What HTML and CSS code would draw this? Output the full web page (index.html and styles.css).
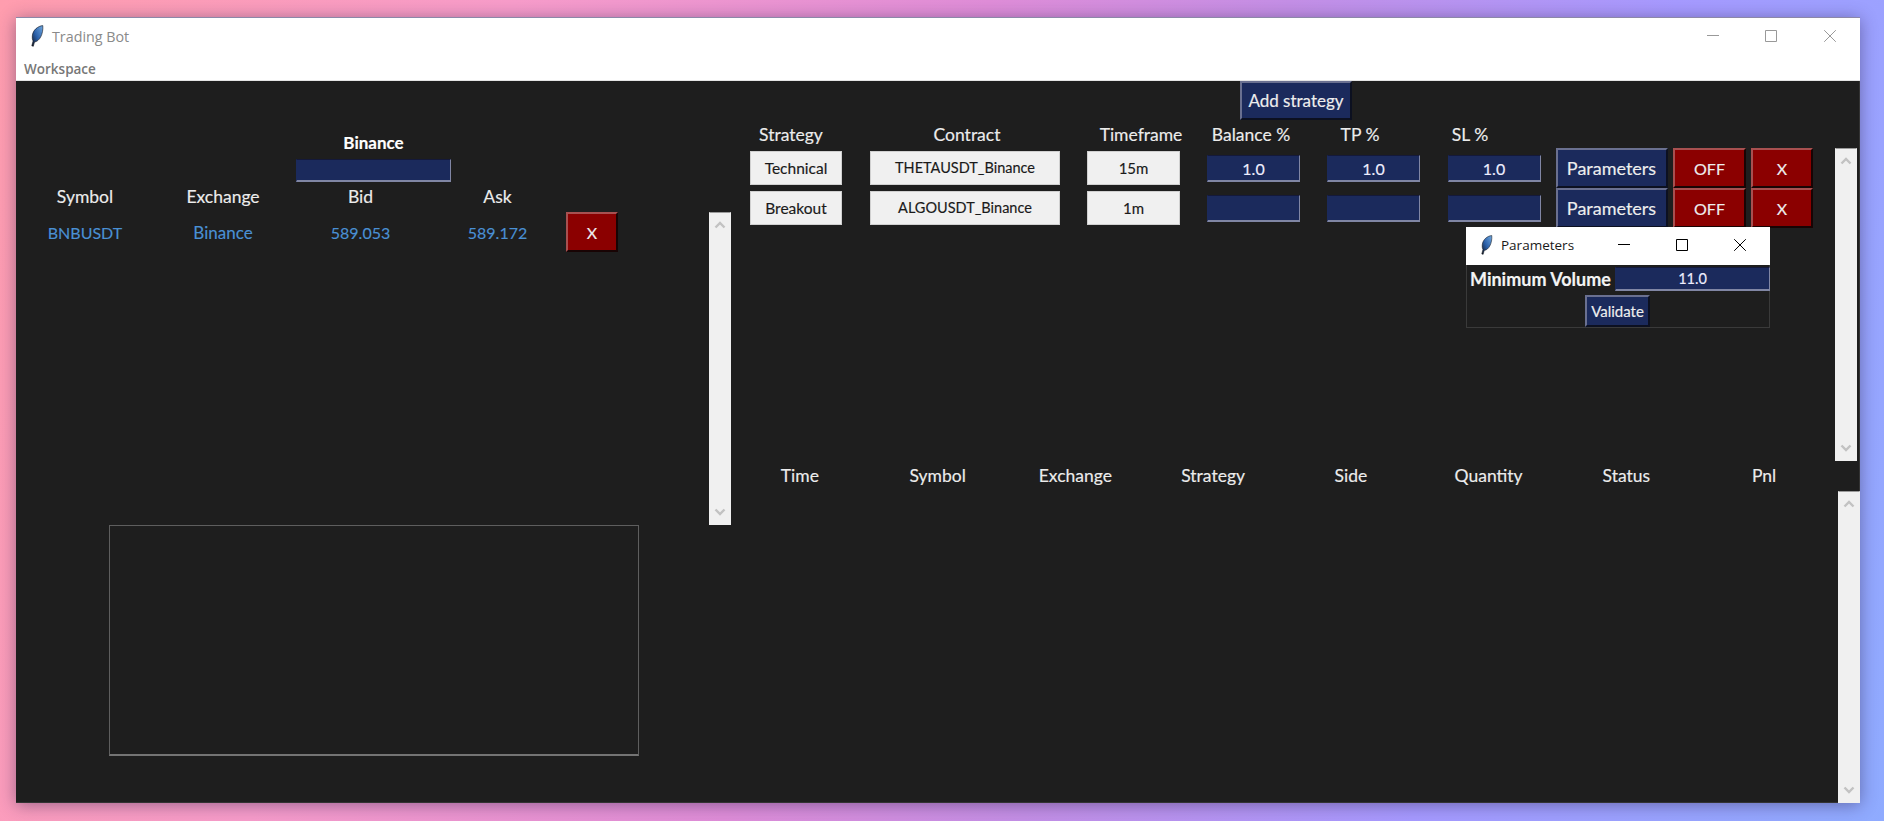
FILE: index.html
```html
<!DOCTYPE html>
<html lang="en">
<head>
<meta charset="utf-8">
<title>Trading Bot</title>
<link rel="stylesheet" href="styles.css">
</head>
<body>
<svg class="defs" width="0" height="0" aria-hidden="true">
  <defs>
    <linearGradient id="quill" x1="0" y1="1" x2="1" y2="0">
      <stop offset="0" stop-color="#10131c"/>
      <stop offset=".45" stop-color="#2a5fa8"/>
      <stop offset="1" stop-color="#6fa8e0"/>
    </linearGradient>
    <symbol id="feather" viewBox="0 0 14 22">
      <path d="M12.800.600C8 1 2.800 5 2.300 11c-.2 2 .1 3.600.8 5L1.800 20.800l1.500.5 1.200-4.300C9.500 16.500 13.500 9 12.800.600z" fill="url(#quill)" stroke="#11141c" stroke-width=".6"/>
    </symbol>
    <symbol id="min" viewBox="0 0 12 12"><path d="M0 5.500h12" fill="none" stroke="currentColor"/></symbol>
    <symbol id="max" viewBox="0 0 12 12"><path d="M.5.500h11v11H.5z" fill="none" stroke="currentColor"/></symbol>
    <symbol id="close" viewBox="0 0 12 12"><path d="M.2.200l11.600 11.600M11.800.200L.2 11.800" fill="none" stroke="currentColor"/></symbol>
    <symbol id="up" viewBox="0 0 12 8"><path d="M1.500 6.500L6 2l4.500 4.500" fill="none" stroke="currentColor" stroke-width="2.400"/></symbol>
    <symbol id="down" viewBox="0 0 12 8"><path d="M1.500 1.500L6 6l4.500-4.500" fill="none" stroke="currentColor" stroke-width="2.400"/></symbol>
  </defs>
</svg>

<div class="window">
  <header class="titlebar">
    <svg class="feather"><use href="#feather"/></svg>
    <span class="title">Trading Bot</span>
    <div class="controls">
      <svg class="ctl"><use href="#min"/></svg>
      <svg class="ctl"><use href="#max"/></svg>
      <svg class="ctl"><use href="#close"/></svg>
    </div>
  </header>
  <nav class="menubar">Workspace</nav>

  <main class="main">
    <section class="left">
      <div class="watch-area">
        <div class="watch">
          <div class="exchange-pick">
            <div class="exchange-name">Binance</div>
            <div class="entry entry-pick"></div>
          </div>
          <div class="watch-grid">
            <div class="head">Symbol</div>
            <div class="head">Exchange</div>
            <div class="head">Bid</div>
            <div class="head">Ask</div>
            <div></div>
            <div class="quote">BNBUSDT</div>
            <div class="quote quote-word">Binance</div>
            <div class="quote">589.053</div>
            <div class="quote">589.172</div>
            <button class="btn red watch-x">X</button>
          </div>
        </div>
        <div class="scrollbar sb-watch">
          <svg class="chev"><use href="#up"/></svg>
          <svg class="chev"><use href="#down"/></svg>
        </div>
      </div>
      <div class="logbox"></div>
    </section>

    <section class="right">
      <div class="strategy-area">
        <div class="strategies">
          <button class="btn navy add">Add strategy</button>
          <div class="strat-head">
            <div class="head">Strategy</div>
            <div class="head">Contract</div>
            <div class="head">Timeframe</div>
            <div class="head">Balance %</div>
            <div class="head">TP %</div>
            <div class="head">SL %</div>
          </div>
          <div class="strat-row">
            <div class="pick p-strategy">Technical</div>
            <div class="pick p-contract">THETAUSDT_Binance</div>
            <div class="pick p-time">15m</div>
            <div class="entry entry-num">1.0</div>
            <div class="entry entry-num">1.0</div>
            <div class="entry entry-num">1.0</div>
            <button class="btn navy b-param">Parameters</button>
            <button class="btn red b-off">OFF</button>
            <button class="btn red b-x">X</button>
          </div>
          <div class="strat-row">
            <div class="pick p-strategy">Breakout</div>
            <div class="pick p-contract">ALGOUSDT_Binance</div>
            <div class="pick p-time">1m</div>
            <div class="entry entry-num"></div>
            <div class="entry entry-num"></div>
            <div class="entry entry-num"></div>
            <button class="btn navy b-param">Parameters</button>
            <button class="btn red b-off">OFF</button>
            <button class="btn red b-x">X</button>
          </div>
        </div>
        <div class="scrollbar sb-strategy">
          <svg class="chev"><use href="#up"/></svg>
          <svg class="chev"><use href="#down"/></svg>
        </div>
      </div>

      <div class="trades-area">
        <div class="trades-head">
          <div class="head">Time</div>
          <div class="head">Symbol</div>
          <div class="head">Exchange</div>
          <div class="head">Strategy</div>
          <div class="head">Side</div>
          <div class="head">Quantity</div>
          <div class="head">Status</div>
          <div class="head">Pnl</div>
        </div>
        <div class="scrollbar sb-trades">
          <svg class="chev"><use href="#up"/></svg>
          <svg class="chev"><use href="#down"/></svg>
        </div>
      </div>
    </section>
  </main>

  <aside class="popup">
    <header class="popup-title">
      <svg class="feather popup-feather"><use href="#feather"/></svg>
      <span class="popup-name">Parameters</span>
      <div class="popup-controls">
        <svg class="ctl"><use href="#min"/></svg>
        <svg class="ctl"><use href="#max"/></svg>
        <svg class="ctl"><use href="#close"/></svg>
      </div>
    </header>
    <div class="popup-body">
      <div class="popup-row">
        <span class="popup-label">Minimum Volume</span>
        <div class="entry popup-entry">11.0</div>
      </div>
      <button class="btn navy validate">Validate</button>
    </div>
  </aside>
</div>
</body>
</html>
```

FILE: styles.css
```css
* { box-sizing: border-box; }

html, body { margin: 0; height: 100%; }

body {
  height: 100vh;
  overflow: hidden;
  padding: 17px 24px 18px 16px;
  background:
    linear-gradient(108deg, #ff9dae 0%, #f79cca 24%, #df8dd8 46%, #c48fe6 60%, #a69aff 78%, #8fabff 100%);
  font-family: Lato, "Open Sans", sans-serif;
  font-size: 16px;
  color: #ececec;
  -webkit-text-stroke: .15px currentColor;
}

.defs { position: absolute; }

.window {
  position: relative;
  height: 786px;
  display: flex;
  flex-direction: column;
  background: #fff;
  border-top: 1px solid #8c88a8;
  box-shadow: 0 2px 16px rgba(40, 30, 70, .45);
}

.titlebar {
  flex: 0 0 43px;
  display: flex;
  align-items: center;
  padding: 0 0 7px 14px;
  color: #999;
}

.feather { width: 14px; height: 22px; flex: none; }

.title {
  margin-left: 8px;
  font-family: "Open Sans", sans-serif;
  font-size: 14.300px;
  color: #8a8a8a;
  -webkit-text-stroke: 0;
}

.controls {
  margin-left: auto;
  display: flex;
  gap: 46px;
  padding-right: 24px;
}

.ctl { width: 12px; height: 12px; display: block; }

.controls .ctl + .ctl + .ctl { margin-left: 1px; }

.menubar {
  flex: 0 0 20px;
  padding-left: 8px;
  font-family: "Open Sans", sans-serif;
  font-size: 13.500px;
  font-weight: 600;
  line-height: 17px;
  color: #777;
  border-bottom: 1px solid #e4e4e4;
  -webkit-text-stroke: 0;
}

.main {
  flex: 1;
  display: flex;
  background: #1e1e1e;
  border-right: 1px solid #333;
  border-bottom: 1px solid #333;
  min-height: 0;
}

.left { flex: 0 0 715px; }

.watch-area { display: flex; height: 444px; }

.watch { flex: 0 0 693px; }

.exchange-pick { width: 155px; margin-left: 280px; padding-top: 49px; }

.exchange-name {
  height: 29px;
  line-height: 25px;
  text-align: center;
  font-size: 17px;
  font-weight: 700;
  color: #fff;
}

.entry {
  background: #1b2a5c;
  border: 1px solid;
  border-color: #14193a #8086a4 #8086a4 #1b2a5c;
  border-bottom-width: 2px;
  color: #eef;
  text-align: center;
}

.entry-pick { height: 23px; }

.watch-grid {
  display: grid;
  grid-template-columns: 138px 138px 137px 137px 52px;
  grid-template-rows: 32px 38px;
  align-items: center;
  justify-items: center;
}

.head {
  font-size: 17.500px;
  line-height: 20px;
  margin-top: -3px;
  text-align: center;
  white-space: nowrap;
}

.quote { color: #4a90d4; margin-top: -2px; }

.quote-word { font-size: 17px; }

.btn {
  padding: 0;
  font: inherit;
  font-size: 17px;
  color: #eee;
  border: 2px solid;
  cursor: default;
  white-space: nowrap;
}

.navy {
  background: #1b2a5c;
  border-color: #6a7090 #0c1020 #0c1020 #6a7090;
}

.red {
  background: #8b0000;
  border-color: #a85050 #180404 #180404 #a85050;
}

.watch-x {
  width: 52px;
  height: 40px;
  margin-top: -2px;
}

.b-off, .b-x, .watch-x { font-size: 16px; }

.scrollbar {
  flex: none;
  width: 22px;
  display: flex;
  flex-direction: column;
  justify-content: space-between;
  align-items: center;
  padding: 8px 0;
  background: #f0f0f0;
  border: 1px solid #f0f0f0;
  border-top-color: #9a9a9a;
  color: #c2c2c2;
}

.chev { width: 12px; height: 8px; display: block; }

.sb-watch { height: 313px; margin-top: 131px; }

.logbox {
  width: 530px;
  height: 231px;
  margin-left: 93px;
  border: 1px solid #5e5e5e;
  border-bottom: 2px solid #747474;
}

.right {
  flex: 1;
  display: flex;
  flex-direction: column;
  min-width: 0;
}

.strategy-area { display: flex; height: 380px; }

.strategies { flex: 0 0 1104px; }

.add {
  display: block;
  width: 112px;
  height: 39px;
  margin-left: 509px;
  line-height: 33px;
}

.strat-head {
  display: grid;
  grid-template-columns: 118px 234px 114px 106px 112px 108px;
  height: 28px;
  padding-top: 4px;
  align-items: center;
  margin-left: 1px;
}

.strat-row {
  display: grid;
  grid-template-columns: 130px 208px 129px 111px 129px 112px 123px 73px 72px;
  height: 40px;
  align-items: center;
  justify-items: center;
}

.pick {
  height: 34px;
  line-height: 32px;
  background: #f0f0f0;
  color: #1a1a1a;
  font-size: 15.500px;
  text-align: center;
  border: 1px solid #d0d0d0;
}

.p-strategy { width: 92px; }
.p-contract { width: 190px; font-size: 14.500px; }
.p-time { width: 93px; font-size: 15px; }

.entry-num { width: 93px; height: 27px; line-height: 25px; }

.b-param { width: 112px; height: 40px; font-size: 18px; }
.b-off { width: 73px; height: 40px; }
.b-x { width: 62px; height: 40px; }

.sb-strategy { height: 313px; margin-top: 67px; margin-left: 0; }

.trades-area { display: flex; flex: 1; min-height: 0; }

.trades-head {
  flex: 0 0 1107px;
  display: grid;
  grid-template-columns: repeat(8, 137.750px);
  height: 30px;
  align-items: center;
  align-self: flex-start;
}

.trades-head .head { margin-top: -1px; }

.sb-trades { height: 312px; margin-top: 30px; }

.popup {
  position: absolute;
  top: 209px;
  left: 1450px;
  width: 304px;
  height: 100px;
  display: flex;
  flex-direction: column;
}

.popup-title {
  flex: 0 0 38px;
  display: flex;
  align-items: center;
  padding: 0 0 2px 14px;
  background: #fff;
  color: #000;
}

.popup-feather { width: 13px; height: 20px; }

.popup-name {
  margin-left: 8px;
  font-family: "Open Sans", sans-serif;
  font-size: 13.500px;
  color: #1a1a1a;
  -webkit-text-stroke: 0;
}

.popup-controls {
  margin-left: auto;
  display: flex;
  gap: 46px;
  padding-right: 24px;
}

.popup-body {
  flex: 1;
  padding-top: 2px;
  background: #1e1e1e;
  border: 1px solid #3a3a3a;
  border-top: 0;
}

.popup-row {
  display: flex;
  align-items: center;
  height: 24px;
}

.popup-label {
  padding-left: 3px;
  font-weight: 700;
  font-size: 18px;
  color: #f4f4f4;
  white-space: nowrap;
}

.popup-entry {
  margin-left: auto;
  margin-right: -1px;
  width: 155px;
  height: 24px;
  line-height: 22px;
  font-size: 14.500px;
}

.validate {
  display: block;
  width: 65px;
  height: 32px;
  margin: 4px 0 0 118px;
  font-size: 15px;
}
```
